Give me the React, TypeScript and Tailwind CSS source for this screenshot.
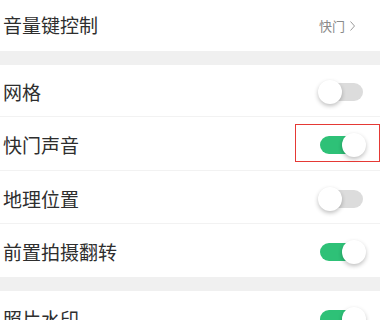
import React from "react";

function Toggle({ on }: { on: boolean }) {
  return (
    <div className="relative w-[48px] h-[24px]">
      <div
        className={
          "absolute left-[2px] right-[3px] top-[3px] h-[18px] rounded-full " +
          (on ? "bg-[#2ec177]" : "bg-[#dcdcdc]")
        }
      />
      <div
        className={
          "absolute top-0 w-[24px] h-[24px] rounded-full bg-white shadow-[0_2px_4px_rgba(0,0,0,0.25)] " +
          (on ? "right-0" : "left-0")
        }
      />
    </div>
  );
}

function Row({
  label,
  on,
  h,
  border,
  mark,
}: {
  label: string;
  on: boolean;
  h: string;
  border?: boolean;
  mark?: boolean;
}) {
  return (
    <div
      className={
        "relative flex items-center justify-between pl-[3px] pr-[14px] " +
        h +
        (border ? " border-b border-[#f2f2f2]" : "")
      }
    >
      <span className="pt-[4px]">{label}</span>
      <div className="pt-[3px]">
        <Toggle on={on} />
      </div>
      {mark && (
        <div className="absolute right-0 top-[7px] w-[85px] h-[38px] border border-[#e53935]" />
      )}
    </div>
  );
}

export default function App() {
  return (
    <div
      className="w-[388px] h-[320px] overflow-hidden bg-white text-[19px] text-[#2e2e2e]"
      style={{ fontFamily: '"Noto Sans CJK SC", "Noto Sans", sans-serif' }}
    >
      <div className="w-[380px]">
        {/* 音量键 */}
        <div className="flex items-center justify-between pl-[3px] pr-[25px] h-[51px]">
          <span>音量键控制</span>
          <div className="flex items-center gap-[5px] text-[13px] text-[#8a8a8a]">
            <span>快门</span>
            <svg width="5" height="10" viewBox="0 0 5 10" fill="none">
              <path d="M0.5 0.5 L4.5 5 L0.5 9.5" stroke="#9a9a9a" strokeWidth="1" />
            </svg>
          </div>
        </div>
        <div className="h-[14px] bg-[#f0f0f0]" />

        <Row label="网格" on={false} h="h-[52px]" border />
        <Row label="快门声音" on={true} h="h-[54px]" border mark />
        <Row label="地理位置" on={false} h="h-[53px]" border />
        <Row label="前置拍摄翻转" on={true} h="h-[53px]" />

        <div className="h-[14px] bg-[#f0f0f0]" />
        <Row label="照片水印" on={true} h="h-[53px]" />
      </div>
    </div>
  );
}
